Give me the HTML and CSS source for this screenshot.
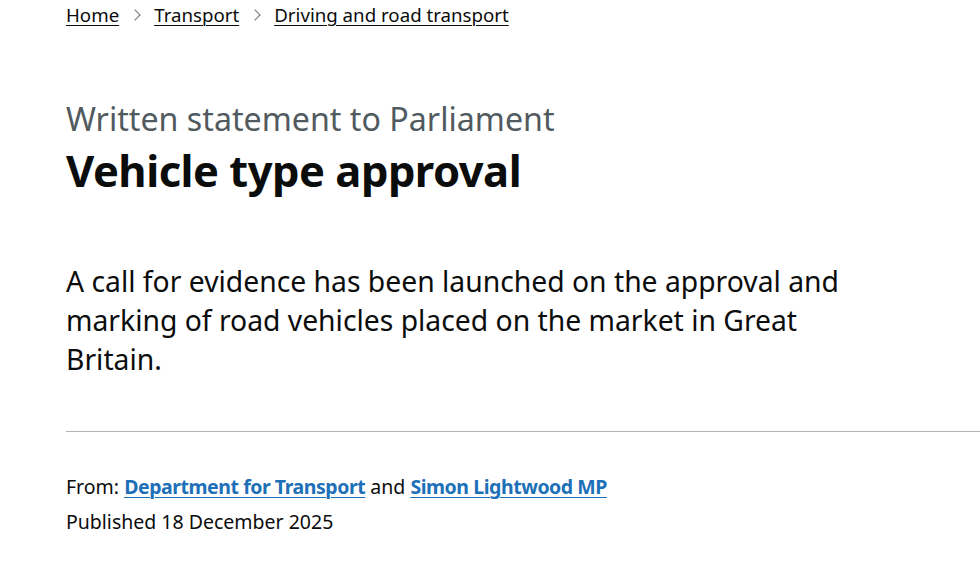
FILE: index.html
```html
<!DOCTYPE html>
<html lang="en">
<head>
    <meta charset="UTF-8">
    <meta name="viewport" content="width=device-width, initial-scale=1.0">
    <title>Vehicle type approval - GOV.UK</title>
    <link rel="stylesheet" href="styles.css">
</head>
<body>
    <div class="page">
        <nav class="breadcrumbs">
            <ol class="breadcrumbs-list">
                <li class="breadcrumbs-item"><a href="#" class="breadcrumbs-link">Home</a></li>
                <li class="breadcrumbs-item"><a href="#" class="breadcrumbs-link">Transport</a></li>
                <li class="breadcrumbs-item"><a href="#" class="breadcrumbs-link">Driving and road transport</a></li>
            </ol>
        </nav>

        <main class="main">
            <span class="caption">Written statement to Parliament</span>
            <h1 class="title">Vehicle type approval</h1>

            <p class="lead">A call for evidence has been launched on the approval and marking of road vehicles placed on the market in Great Britain.</p>

            <hr class="divider">

            <div class="metadata">
                <p class="meta-line">From: <a href="#" class="meta-link">Department for Transport</a> and <a href="#" class="meta-link">Simon Lightwood MP</a></p>
                <p class="meta-line">Published 18 December 2025</p>
            </div>
        </main>
    </div>
</body>
</html>
```

FILE: styles.css
```css
body {
    margin: 0;
    font-family: "Noto Sans", Arial, sans-serif;
    color: #0b0c0c;
    background: #ffffff;
}
.page {
    padding-left: 66px;
}
/* BREADCRUMBS */
.breadcrumbs-list {
    display: flex;
    margin: 0;
    padding: 3px 0 0;
    list-style: none;
}
.breadcrumbs-item {
    display: flex;
    align-items: center;
    font-size: 18.7px;
    line-height: 24px;
}
.breadcrumbs-item + .breadcrumbs-item::before {
    content: "";
    width: 7px;
    height: 7px;
    margin: 0 15px 0 12px;
    border-top: 1.5px solid #6f777b;
    border-right: 1.5px solid #6f777b;
    transform: rotate(45deg);
}
.breadcrumbs-link {
    color: #0b0c0c;
    text-decoration: underline;
    text-decoration-thickness: 1px;
    text-underline-offset: 3px;
}
/* HEADING */
.main {
    padding-top: 72px;
}
.caption {
    display: block;
    font-size: 32.2px;
    line-height: 40px;
    color: #505a5f;
}
.title {
    margin: 6px 0 0;
    font-size: 43.5px;
    font-weight: 700;
    line-height: 50px;
    letter-spacing: -0.5px;
}
.lead {
    max-width: 790px;
    margin: 67px 0 0;
    font-size: 28.3px;
    line-height: 39px;
}
.divider {
    margin: 52px 0 0;
    border: 0;
    border-top: 1px solid #b1b4b6;
}
/* METADATA */
.metadata {
    padding-top: 41px;
}
.meta-line {
    margin: 0 0 8px;
    font-size: 19.5px;
    line-height: 27px;
}
.meta-link {
    color: #1d70b8;
    font-weight: 700;
    letter-spacing: -0.45px;
    text-decoration: underline;
    text-decoration-thickness: 1px;
    text-underline-offset: 3px;
}
```
